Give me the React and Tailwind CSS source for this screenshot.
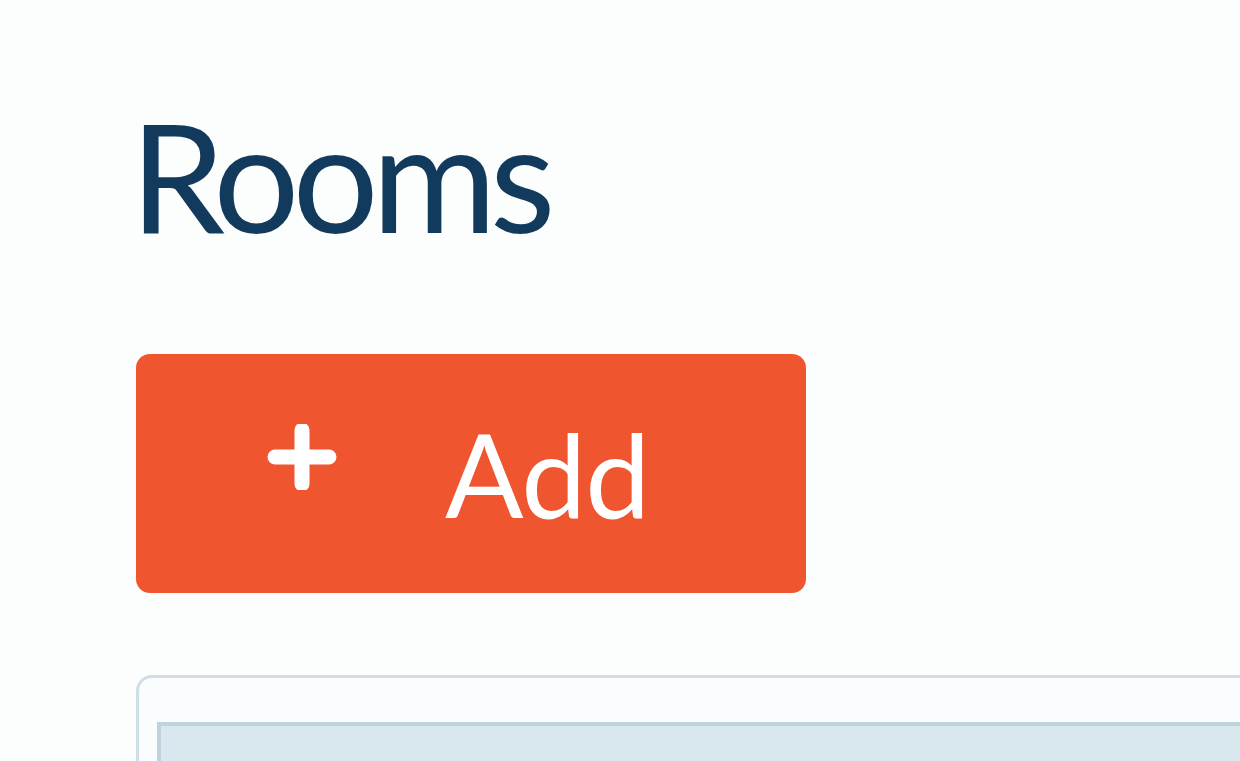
import React from 'react';

const PlusIcon = () => (
  <svg width="76" height="66" viewBox="0 0 76 66" className="block">
    <path d="M38 6v54M11 33h54" stroke="#ffffff" strokeWidth="15" strokeLinecap="round" />
  </svg>
);

const App = () => {
  return (
    <div
      className="h-screen bg-[#fcfdfd] pl-[136px] pt-[74px] overflow-hidden"
      style={{ fontFamily: 'Lato, "Noto Sans", sans-serif' }}
    >
      {/* Page title */}
      <h1 className="-ml-[6px] text-[152px] leading-[200px] text-[#113a5c] font-normal tracking-[-7px] h-[200px]">
        Rooms
      </h1>

      {/* Add button */}
      <button className="mt-[80px] w-[670px] h-[239px] rounded-[14px] bg-[#ef552f] flex items-start pl-[128px] pt-[70px]">
        <PlusIcon />
        <span className="ml-[105px] text-[116px] leading-none text-white mt-[-8px] tracking-[-1px]">
          Add
        </span>
      </button>

      {/* Rooms table panel */}
      <div className="mt-[82px] w-[1200px] h-[200px] rounded-[16px] border-[3px] border-[#cfdee7] bg-[#fbfcfd] pl-[18px] pt-[44px]">
        <div className="h-full bg-[#d9e7ef] border-t-[4px] border-l-[4px] border-[#bfd3df]" />
      </div>
    </div>
  );
};

export default App;
